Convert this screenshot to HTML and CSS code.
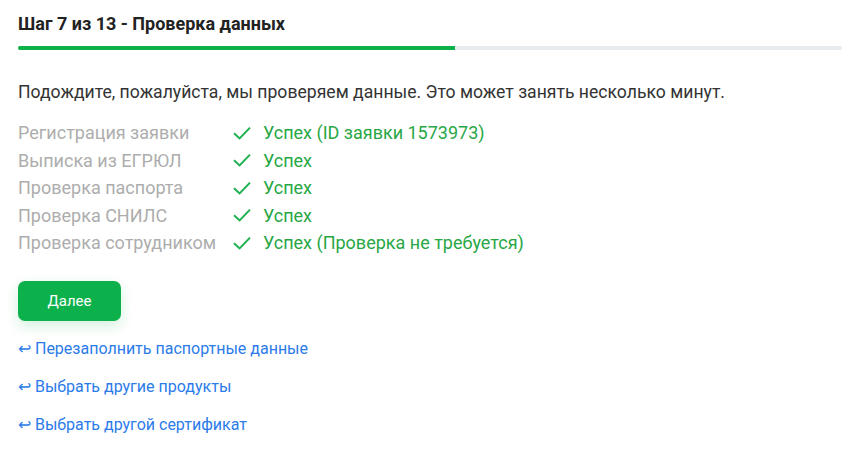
FILE: index.html
```html
<!DOCTYPE html>
<html lang="ru">
<head>
<meta charset="utf-8">
<link rel="stylesheet" href="styles.css">
</head>
<body>
<div class="page">
  <h1 class="title">Шаг 7 из 13 - Проверка данных</h1>
  <div class="progress"><div class="progress-fill" style="width:53%"></div></div>
  <p class="intro">Подождите, пожалуйста, мы проверяем данные. Это может занять несколько минут.</p>
  <div class="checks">
    <div class="label">Регистрация заявки</div>
    <div class="status"><svg class="check" viewBox="0 0 18 14"><path d="M1 7.2 L6.6 12.4 L17 1.6"/></svg><span>Успех (ID заявки 1573973)</span></div>
    <div class="label">Выписка из ЕГРЮЛ</div>
    <div class="status"><svg class="check" viewBox="0 0 18 14"><path d="M1 7.2 L6.6 12.4 L17 1.6"/></svg><span>Успех</span></div>
    <div class="label">Проверка паспорта</div>
    <div class="status"><svg class="check" viewBox="0 0 18 14"><path d="M1 7.2 L6.6 12.4 L17 1.6"/></svg><span>Успех</span></div>
    <div class="label">Проверка СНИЛС</div>
    <div class="status"><svg class="check" viewBox="0 0 18 14"><path d="M1 7.2 L6.6 12.4 L17 1.6"/></svg><span>Успех</span></div>
    <div class="label">Проверка сотрудником</div>
    <div class="status"><svg class="check" viewBox="0 0 18 14"><path d="M1 7.2 L6.6 12.4 L17 1.6"/></svg><span>Успех (Проверка не требуется)</span></div>
  </div>
  <button class="btn">Далее</button>
  <ul class="links">
    <li><a href="#">↩ Перезаполнить паспортные данные</a></li>
    <li><a href="#">↩ Выбрать другие продукты</a></li>
    <li><a href="#">↩ Выбрать другой сертификат</a></li>
  </ul>
</div>
</body>
</html>
```

FILE: styles.css
```css
* { box-sizing: border-box; }
html, body { margin: 0; padding: 0; background: #fff; }
body { font-family: Roboto, "Noto Sans", Arial, sans-serif; color: #333; }
.page { padding: 13px 8px 0 18px; }
.title { margin: 0; font-size: 18px; font-weight: 700; line-height: 22px; color: #222; }
.progress { margin-top: 11px; height: 4px; background: #e9ecef; border-radius: 2px; overflow: hidden; }
.progress-fill { height: 100%; background: #0db14b; }
.intro { margin: 31px 0 0; font-size: 17.6px; line-height: 22px; color: #333; }
.checks { margin-top: 16px; display: grid; grid-template-columns: 214px auto; grid-auto-rows: 27.5px; align-items: center; justify-content: start; font-size: 18px; }
.label { color: #adadad; }
.status { display: flex; align-items: center; color: #28a745; }
.check { width: 18px; height: 14px; margin: 0 12px 0 1px; fill: none; stroke: #1fb14f; stroke-width: 2; }
.btn { display: block; margin-top: 24px; width: 103px; height: 40px; border: 0; border-radius: 7px; background: #0db14b; color: #fff; font-family: inherit; font-size: 15px; font-weight: 400; box-shadow: 0 5px 14px rgba(13,177,75,0.18); }
.links { list-style: none; margin: 18px 0 0; padding: 0; }
.links li { line-height: 20px; margin-bottom: 18px; }
.links a { color: #2b7bea; font-size: 16px; text-decoration: none; }
```
